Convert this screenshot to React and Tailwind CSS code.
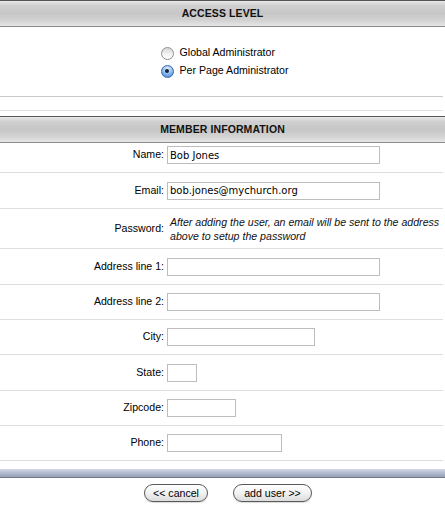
const FIELDS = [
  { label: 'Name', value: 'Bob Jones', w: 'w-[213px]', row: 'h-[29px] pb-[5px]' },
  { label: 'Email', value: 'bob.jones@mychurch.org', w: 'w-[213px]', row: 'h-[35px]' },
  { label: 'Password', note: true, row: 'h-[39px]' },
  { label: 'Address line 1', value: '', w: 'w-[213px]', row: 'h-[35px]' },
  { label: 'Address line 2', value: '', w: 'w-[213px]', row: 'h-[34px]' },
  { label: 'City', value: '', w: 'w-[148px]', row: 'h-[34px]' },
  { label: 'State', value: '', w: 'w-[30px]', row: 'h-[35px]' },
  { label: 'Zipcode', value: '', w: 'w-[69px]', row: 'h-[34px]' },
  { label: 'Phone', value: '', w: 'w-[115px]', row: 'h-[34px]' },
];

function SectionHeader({ children }) {
  return (
    <div className="h-[27px] flex items-center justify-center border-t border-t-[#565656] border-b border-b-[#8a8a8a] bg-[linear-gradient(to_bottom,#e9e9e9_0%,#d0d0d0_18%,#c6c6c6_50%,#d3d3d3_78%,#e6e6e6_100%)]">
      <span className="text-[10.5px] font-bold text-[#111] tracking-[0.1px]">{children}</span>
    </div>
  );
}

function Radio({ checked }) {
  if (checked) {
    return (
      <span className="w-[13px] h-[13px] rounded-full border border-[#3a69a8] bg-[radial-gradient(circle_at_50%_25%,#e3effc_0%,#8dbcf0_50%,#3f80d6_100%)] flex items-center justify-center shrink-0">
        <span className="w-[4px] h-[4px] rounded-full bg-[#16243a]" />
      </span>
    );
  }
  return (
    <span className="w-[13px] h-[13px] rounded-full border border-[#8f8f8f] bg-[linear-gradient(to_bottom,#d8d8d8_0%,#f4f4f4_60%,#ffffff_100%)] shrink-0" />
  );
}

export default function App() {
  return (
    <div className="w-[445px] h-[510px] bg-white text-black font-['Liberation_Sans',Arial,sans-serif] overflow-hidden">

      {/* access level */}
      <SectionHeader>ACCESS LEVEL</SectionHeader>
      <div className="h-[69px] pt-[17px] flex justify-center pl-[4px]">
        <div className="flex flex-col">
          <label className="h-[18px] flex items-center gap-[6px] text-[10.6px]">
            <Radio /> Global Administrator
          </label>
          <label className="h-[18px] flex items-center gap-[6px] text-[10.6px]">
            <Radio checked /> Per Page Administrator
          </label>
        </div>
      </div>
      <div className="h-px bg-[#cacaca] mr-[2px]" />
      <div className="h-[13px]" />
      <div className="h-px bg-[#e2e2e2] mr-[2px]" />
      <div className="h-[5px]" />

      {/* member info */}
      <SectionHeader>MEMBER INFORMATION</SectionHeader>
      {FIELDS.map(f => (
        <div key={f.label} className="border-b border-[#dedede] mr-[2px]">
          <div className={`flex items-center ${f.row}`}>
            <span className="w-[165px] text-right text-[10.6px] pr-[1px] shrink-0">{f.label}:</span>
            {f.note ? (
              <span className="pl-[5px] italic text-[10.6px] leading-[14px] text-[#111]">
                After adding the user, an email will be sent to the address above to setup the password
              </span>
            ) : (
              <input
                defaultValue={f.value}
                className={`${f.w} h-[18px] ml-[2px] px-[2px] border border-[#bdbdbd] bg-white text-[10px] font-['DejaVu_Sans',sans-serif] text-black outline-none`}
              />
            )}
          </div>
        </div>
      ))}

      {/* footer */}
      <div className="h-[8px]" />
      <div className="h-[9px] border-b border-[#6f7b8f] bg-[linear-gradient(to_bottom,#d4dbe8_0%,#b3bed1_45%,#95a1b7_100%)]" />
      <div className="flex justify-center gap-[25px] pl-[11px] pt-[6px]">
        <button className="w-[64px] h-[18px] rounded-full border border-[#5a5a5a] bg-[linear-gradient(to_bottom,#ffffff_0%,#f2f2f2_50%,#dcdcdc_100%)] text-[10.6px] leading-none shadow-[0_1px_1px_rgba(0,0,0,0.15)]">
          &lt;&lt; cancel
        </button>
        <button className="w-[79px] h-[18px] rounded-full border border-[#5a5a5a] bg-[linear-gradient(to_bottom,#ffffff_0%,#f2f2f2_50%,#dcdcdc_100%)] text-[10.6px] leading-none shadow-[0_1px_1px_rgba(0,0,0,0.15)]">
          add user &gt;&gt;
        </button>
      </div>
    </div>
  );
}
